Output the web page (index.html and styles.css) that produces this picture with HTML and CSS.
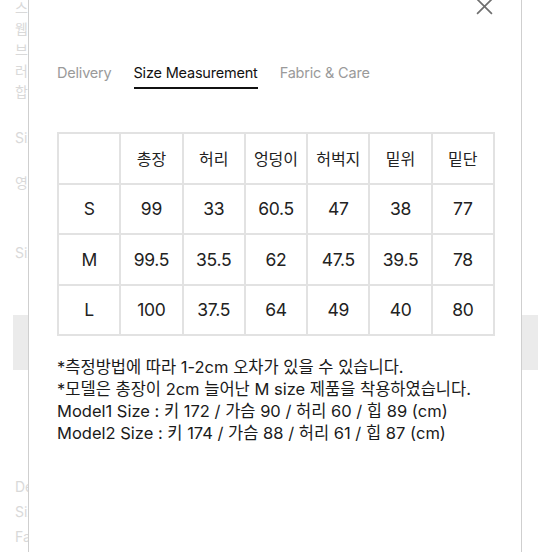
FILE: index.html
```html
<!DOCTYPE html>
<html lang="ko">
<head>
<meta charset="utf-8">
<title>Size Measurement</title>
<link rel="stylesheet" href="styles.css">
</head>
<body>
<div class="page">
  <div class="page-block">
    <p>스타일</p>
    <p>웹사이트</p>
    <p>브랜드</p>
    <p>러블리</p>
    <p>합리적</p>
  </div>
  <p class="page-line l-sc">Size</p>
  <p class="page-line l-yeong">영업일</p>
  <p class="page-line l-si">Size</p>
  <div class="page-bar"></div>
  <div class="page-foot">
    <p>Delivery</p>
    <p>Size</p>
    <p>Fabric</p>
  </div>
</div>

<div class="modal">
  <button class="close" aria-label="닫기">
    <svg viewBox="0 0 16 16" width="16" height="16"><path d="M1 1 L15 15 M15 1 L1 15" stroke="#6f6f6f" stroke-width="1.6" fill="none"/></svg>
  </button>
  <nav class="tabs">
    <span class="tab">Delivery</span>
    <span class="tab active">Size Measurement</span>
    <span class="tab">Fabric &amp; Care</span>
  </nav>
  <table class="size-table">
    <tr><td></td><td>총장</td><td>허리</td><td>엉덩이</td><td>허벅지</td><td>밑위</td><td>밑단</td></tr>
    <tr><td>S</td><td>99</td><td>33</td><td>60.5</td><td>47</td><td>38</td><td>77</td></tr>
    <tr><td>M</td><td>99.5</td><td>35.5</td><td>62</td><td>47.5</td><td>39.5</td><td>78</td></tr>
    <tr><td>L</td><td>100</td><td>37.5</td><td>64</td><td>49</td><td>40</td><td>80</td></tr>
  </table>
  <div class="notes">
    <p>*측정방법에 따라 1-2cm 오차가 있을 수 있습니다.</p>
    <p>*모델은 총장이 2cm 늘어난 M size 제품을 착용하였습니다.</p>
    <p>Model1 Size : 키 172 / 가슴 90 / 허리 60 / 힙 89 (cm)</p>
    <p>Model2 Size : 키 174 / 가슴 88 / 허리 61 / 힙 87 (cm)</p>
  </div>
</div>
</body>
</html>
```
FILE: styles.css
```css
html, body {
  margin: 0;
  padding: 0;
  background: #fff;
  width: 552px;
  height: 552px;
  overflow: hidden;
  font-family: Inter, "Noto Sans CJK KR", sans-serif;
}
p { margin: 0; }

.page {
  color: #d9d9d9;
  font-size: 14px;
  line-height: 21px;
}
.page-block, .page-line, .page-foot {
  margin-left: 15px;
  width: 13px;
  overflow: hidden;
  white-space: nowrap;
}
.page-block { margin-top: -3px; }
.l-sc { margin-top: 25px; }
.l-yeong { margin-top: 24px; }
.l-si { margin-top: 49px; }
.page-bar {
  margin: 52px 14px 0 13px;
  height: 55px;
  background: #ebebeb;
}
.page-foot { margin-top: 104px; line-height: 25px; }

.modal {
  position: absolute;
  left: 28px;
  top: 0;
  width: 494px;
  height: 552px;
  background: #fff;
  border-left: 1px solid #cfcfcf;
  border-right: 1px solid #cfcfcf;
  box-sizing: border-box;
  padding: 63px 0 0 28px;
}

.close {
  position: absolute;
  top: -2px;
  right: 28px;
  padding: 0;
  border: 0;
  background: none;
  width: 17px;
  height: 17px;
  display: block;
}
.close svg { display: block; width: 17px; height: 17px; }

.tabs {
  display: flex;
  gap: 22px;
  font-size: 14.5px;
  line-height: 20px;
  letter-spacing: -0.2px;
}
.tab {
  color: #9a9a9a;
  padding-bottom: 4px;
}
.tab.active {
  color: #111;
  border-bottom: 2px solid #111;
}

.size-table {
  margin-top: 43px;
  border-collapse: collapse;
  width: 438px;
  table-layout: fixed;
}
.size-table td {
  border: 2px solid #e2e2e2;
  height: 48.5px;
  padding: 0;
  text-align: center;
  font-size: 17.5px;
  color: #222;
  letter-spacing: -0.3px;
}
.size-table tr:first-child td { font-size: 16px; letter-spacing: 0; }

.notes {
  margin-top: 20px;
  font-size: 16.5px;
  line-height: 22px;
  color: #1a1a1a;
  letter-spacing: 0;
  white-space: nowrap;
}
```
